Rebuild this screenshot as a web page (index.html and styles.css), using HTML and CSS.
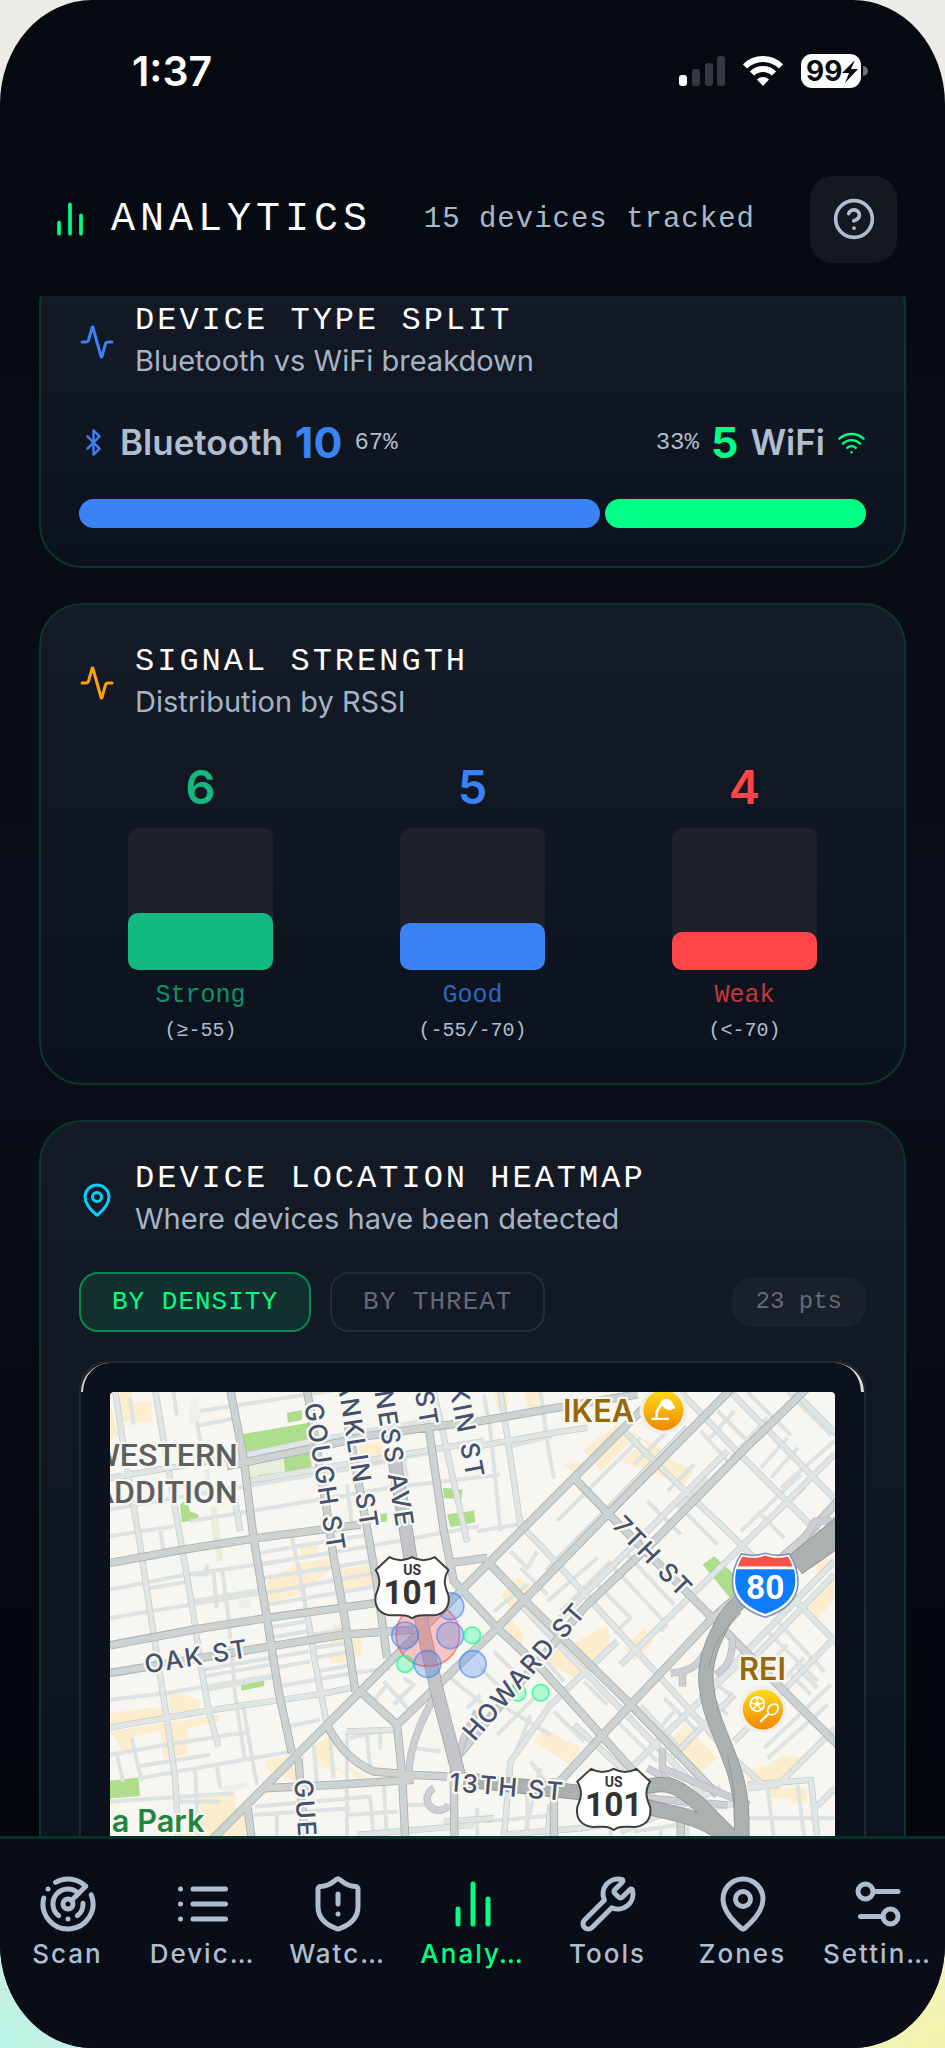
FILE: index.html
```html
<!DOCTYPE html>
<html lang="en">
<head>
    <meta charset="UTF-8">
    <meta name="viewport" content="width=device-width, initial-scale=1.0">
    <title>Analytics</title>
    <link rel="stylesheet" href="styles.css">
</head>
<body>
    <div class="phone">
        <div class="status-bar">
            <span class="clock">1:37</span>
            <div class="status-icons">
                <svg width="48" height="34" viewBox="0 0 48 34">
                    <rect x="1" y="21" width="8" height="11" rx="3" fill="#fff"/>
                    <rect x="14" y="15" width="8" height="17" rx="3" fill="#35393f"/>
                    <rect x="27" y="9" width="8" height="23" rx="3" fill="#35393f"/>
                    <rect x="39" y="2" width="8" height="30" rx="3" fill="#35393f"/>
                </svg>
                <svg width="42" height="34" viewBox="0 0 42 34">
                    <g fill="none" stroke="#fff" stroke-width="6">
                        <path d="M3 12.500a25.500 25.500 0 0 1 36 0"/>
                        <path d="M10 19.500a15.500 15.500 0 0 1 22 0"/>
                    </g>
                    <path d="M21 32l-6-6.500a8.500 8.500 0 0 1 12 0z" fill="#fff"/>
                </svg>
                <svg width="68" height="36" viewBox="0 0 68 36">
                    <rect x="1" y="1" width="60" height="34" rx="11" fill="#fff"/>
                    <path d="M63 13a5 5 0 0 1 0 10z" fill="#6b6e73"/>
                    <text x="6" y="28" class="battery-text">99</text>
                    <path d="M55 7L42 20h7l-4 10 13-14h-7z" fill="#060a12"/>
                </svg>
            </div>
        </div>

        <header class="header">
            <svg class="icon icon-green" width="44" height="44" viewBox="0 0 24 24" stroke-width="2"><path d="M6 20v-6M12 20V4M18 20V10"/></svg>
            <h1>ANALYTICS</h1>
            <span class="tracked">15 devices tracked</span>
            <button type="button" class="help" aria-label="Help">
                <svg class="icon" width="44" height="44" viewBox="0 0 24 24" stroke-width="2"><circle cx="12" cy="12" r="10"/><path d="M9.090 9a3 3 0 0 1 5.830 1c0 2-3 3-3 3M12 17h.01"/></svg>
            </button>
        </header>

        <main>
            <div class="cards">
                <section class="card">
                    <div class="card-head">
                        <svg class="icon icon-blue" width="36" height="36" viewBox="0 0 24 24" stroke-width="2"><path d="M22 12h-2.480a2 2 0 0 0-1.930 1.460l-2.350 8.360a.25.25 0 0 1-.48 0L9.240 2.180a.25.25 0 0 0-.48 0l-2.350 8.360A2 2 0 0 1 4.490 12H2"/></svg>
                        <div>
                            <h2>DEVICE TYPE SPLIT</h2>
                            <p>Bluetooth vs WiFi breakdown</p>
                        </div>
                    </div>
                    <div class="split-row">
                        <div class="split-item">
                            <svg class="icon icon-blue" width="29" height="29" viewBox="0 0 24 24" stroke-width="2"><path d="m7 7 10 10-5 5V2l5 5L7 17"/></svg>
                            <span class="split-name">Bluetooth</span>
                            <span class="split-count blue">10</span>
                            <span class="split-pct">67%</span>
                        </div>
                        <div class="split-item">
                            <span class="split-pct">33%</span>
                            <span class="split-count green">5</span>
                            <span class="split-name">WiFi</span>
                            <svg class="icon icon-green" width="29" height="29" viewBox="0 0 24 24" stroke-width="2"><path d="M12 20h.01M2 8.820a15 15 0 0 1 20 0M5 12.860a10 10 0 0 1 14 0M8.500 16.430a5 5 0 0 1 7 0"/></svg>
                        </div>
                    </div>
                    <div class="split-bar">
                        <div class="bg-blue" style="flex-grow: 10"></div>
                        <div class="bg-green" style="flex-grow: 5"></div>
                    </div>
                </section>

                <section class="card">
                    <div class="card-head">
                        <svg class="icon icon-orange" width="36" height="36" viewBox="0 0 24 24" stroke-width="2"><path d="M22 12h-2.480a2 2 0 0 0-1.930 1.460l-2.350 8.360a.25.25 0 0 1-.48 0L9.240 2.180a.25.25 0 0 0-.48 0l-2.350 8.360A2 2 0 0 1 4.490 12H2"/></svg>
                        <div>
                            <h2>SIGNAL STRENGTH</h2>
                            <p>Distribution by RSSI</p>
                        </div>
                    </div>
                    <div class="signals">
                        <div class="signal emerald">
                            <span class="signal-count">6</span>
                            <div class="signal-track"><div class="signal-fill" style="height: 40%"></div></div>
                            <span class="signal-label">Strong</span>
                            <span class="signal-range">(≥-55)</span>
                        </div>
                        <div class="signal blue">
                            <span class="signal-count">5</span>
                            <div class="signal-track"><div class="signal-fill" style="height: 33.300%"></div></div>
                            <span class="signal-label">Good</span>
                            <span class="signal-range">(-55/-70)</span>
                        </div>
                        <div class="signal red">
                            <span class="signal-count">4</span>
                            <div class="signal-track"><div class="signal-fill" style="height: 26.700%"></div></div>
                            <span class="signal-label">Weak</span>
                            <span class="signal-range">(&lt;-70)</span>
                        </div>
                    </div>
                </section>

                <section class="card">
                    <div class="card-head">
                        <svg class="icon icon-cyan" width="36" height="36" viewBox="0 0 24 24" stroke-width="2"><path d="M20 10c0 4.990-5.540 10.190-7.400 11.800a1 1 0 0 1-1.200 0C9.540 20.190 4 14.990 4 10a8 8 0 0 1 16 0"/><circle cx="12" cy="10" r="3"/></svg>
                        <div>
                            <h2>DEVICE LOCATION HEATMAP</h2>
                            <p>Where devices have been detected</p>
                        </div>
                    </div>
                    <div class="filters">
                        <button type="button" class="filter active">BY DENSITY</button>
                        <button type="button" class="filter">BY THREAT</button>
                        <span class="points">23 pts</span>
                    </div>
                    <div class="map-frame">
                        <svg class="map" viewBox="30 63 2172 1500">
                            <defs>
                                <linearGradient id="gold" x1="0" y1="0" x2="0" y2="1">
                                    <stop offset="0" stop-color="#fddc18"/>
                                    <stop offset="1" stop-color="#f08800"/>
                                </linearGradient>
                                <path id="minor" d="M30 495l190-30M270 450l600-100 330-40M30 655l230-45 210-30 220-35M30 740l240-40 220-35M150 650l120-20M275 690l210-35M30 415l200-35 210-35 300-50 250-50M30 985l170-20 330-55M310 895l200-35M310 915l200-35M320 955l210-40M30 1150l170-30 250-40M110 1185l220-35M120 1220l450-80M30 1290l370-25M240 1290h120M300 120l420-65M290 165l120-25M480 545l110-20 220-35M485 580l320-55 330-60M490 620l320-50M495 665l330-60M500 700l330-55M500 770l120-20M505 800l115-20M630 790l100-15M640 830l100-15M515 860l110-20M520 890l110-20M530 945l230-40 110-15M560 1065l100-20M640 860l110-20M650 900l110-20M465 1305l350-30M460 1330l290-20M740 1330l150-10M750 1100l80-20M800 1090l10 110M840 1085v50M690 1100l10 120M640 1120l10 110M740 1080v330M530 1330v80M810 1280l10 120M850 1240l10 160M285 1190l10 210M350 1180l10 70M50 1150l20 80M95 1100l30 130M430 1010l40 230M180 470l10 70M90 80l10 80M220 63l10 70M290 150l10 60M575 500l20 90 25 140M340 600l10 110M365 590l20 150 20 230 30 200M280 610h40v-30M740 340l15 120M920 1300h60M940 1130l80 10M1050 920l100 80M880 1000l60-60-30-20M850 930l80 90M810 1000l50-60M1100 1010l40-40M1000 240l-90 20 10 60M1150 70l20 110 30 300M1215 230l80-20 60-15M1320 63l20 150 20 110M1130 480l120-20 40-10M1370 450l150-150 100-100M1470 260l90-90M1600 280l100-100M1230 540l50 50 30-50M1260 590l80 80M1340 690l150-130M1380 720l150-150M1480 630l110 110-50 45M1530 580l160 170M1570 540l150 160M1620 530l150 150M1640 390l100 100M1750 420l100 100M1800 180l80 90M1850 120l100 100M1820 210l80-90M1890 260l110-120M1700 360l80-80M1730 410l90-90M1980 290l80-90M2010 320l80-90M2040 350l160-140M1920 480l180-170M1950 500l160-150M1970 420l80 80M2050 170l-40-30M2060 63l130 130M1940 63l130 130M2000 780l150 150M2030 750l140 150M2060 820l-100 100M2110 860l-70 70M2150 950l-60-60M2130 970l-60-60M1990 1130l200-190M2000 1160l180-160M1890 970l-70-50M1880 1030l-60-60M1690 980l100 100M1660 1090l60-70M1550 1050l120 120M1620 1000l110 120M1450 930l70 70M1360 1020l90 90M1200 1000l150 90M1190 1090l110-110M1240 1160l50-130M1290 1170l60 80M1150 1350l220-20M1130 1400v-90M1280 1270v140M1320 1190l-50 210M1200 950l-60-60M1240 900l-60-60M1600 1380l200-30M1760 1340v80M1680 1370v60M1530 1360v60M1940 1340h260M2000 1250l20 160M2090 1240l20 160M1700 760l-20 20M1180 720l100-80M1320 850l70 80"/>
                                <path id="side" d="M165 55l70 415 25 140 15 90 30 200 20 115 30 110M45 55l30 200 45 265 30 200 50 320 25 180 10 180M30 320l210-35 180-30 220-45 350-60M440 330l560-95 150-25M30 1068l290-50 340-50 100-20M620 720l20 130 40 210M400 360l20 120M740 1080l145-5M1000 63l100 450M1110 230l220-40 130-20M1200 63l60 400 60 60 300 330 190 210 80 90 100 90M1560 170l110 110 220 210 80 80 280 290M1740 63l170 180 290 290M1890 63l310 320M2080 63l130 130M1260 700l220 230 330 340M1340 600l420-430M1380 740l500-500M1560 880l480-470 160-160M1800 980l400-410M1920 900l280-290M1900 1110l300-310M1200 1390l240-20 500-80M1210 1400l20-230 120-170 200-190M1420 1060l340 310M1600 1180l330-320M1700 1170l200-200 M1350 1300l-10 110M1940 1240l190-15 20 180M1030 1350l150-10M770 1390l350-30M1560 1380l300-130M2202 1070l-170 170-90 10M2202 1250l-60 60"/>
                                <path id="main" d="M390 55l40 205 30 240 40 240 35 220 40 185M620 55l60 365 20 140 30 160 35 240M740 150l60 320 30 170 30 220M985 170l45 310 30 150 130 140 140 130 260 290 50 60M30 575l220-40 225-35 305-40M30 822l250-47 220-35 330-45M30 905l270-45 210-35 220-35 210-15M380 285l240-50 180-40 210-30 130-15 200-35 270-45M330 1410l260-260 180-180 170-170 220-220 260-260 190-190 90-85M890 1060l300-290 330-340 370-375M1050 1180l100-120 300-350 220-210 265-270 180-175M1340 1270l250-270 240-255 280-245 100-110M1420 320l105 110 315 315 230 235 150 150M1160 570l110 115 320 315 260 270M780 960l110 100 15 150 10 200M680 1060c30 60 70 110 140 140l120 10 100 5M490 1250l210-10 240-15M595 1160l5 80 15 170M440 1290l15 120M1060 1230l2 180M1360 1220v190M1740 1340v80M1050 575l110-15"/>
                                <path id="ramp" d="M1000 980c-40 70-70 140-75 220M1055 1210l35-110 40-80M1000 1250a35 35 0 1 0 45 50M1840 790c-40 90-60 110-130 115M1745 905v40M1895 800c0 70-20 90-50 110M2202 450h-60l-30 50M1685 1130v60l140 60 120 50M1640 1190l90 50M1640 1280l240 20"/>
                                <path id="van" d="M880 250l50 310 35 200 45 200 65 250"/>
                                <path id="freeway" d="M2220 455l-160 130c-100 70-170 110-205 190-30 60-50 120-35 190 10 80 60 160 85 250 20 80 18 110 18 200M2220 500l-130 90M1090 1225l350 38 210-20c60-15 90 10 140 50l120 120M1620 1300c90 30 160 20 280 110"/>
                            </defs>

                            <rect x="30" y="63" width="2172" height="1500" fill="#f7f6f1"/>

                            <!-- blocks -->
                            <path fill="#fbedcd" d="M60 63h35v30h60v60H60zM30 90l25 100-25 20zM600 530l50-8 5 30-50 8zM500 630l80-50 110-20 5 30-100 80-90 25zM720 595l90-15 10 60-95 15zM700 760h20l8 60-40 10zM750 800l30-5 3 60-30 5zM685 850l50-8 3 30-50 5zM205 960l30 5 60 20 5 30-90 10zM30 1025l160-20v40l-160 20zM30 1080l330-50-5 20-90 20-5 80-70 10-10-80-80 15v40l-30 5zM300 1265h105v40l30 20v80H230l70-60zM495 1165l95-15-5 80-90-40zM640 1120l45-25 10 80 40 30-80-20zM740 1180l60 40h-35zM775 225l70-15v50l-60 10zM1180 63h40v50h-30zM1275 63h40v50h-35zM1390 280l70-10-30 40zM1450 240l30-30 30-20 40-30 60 30-110 110zM1560 270l60-50 160 80-30 40zM1620 200l50 20 100 100-30 20zM1200 675l50-55 50 20-60 80zM1230 740l40 50-10 40-50-60zM1340 870l50-60 80 60-35 60zM1410 820l110-60 10 60-40 60zM1570 830l60-60 30 40-60 60zM1300 1110l30-40 110 60-30 50zM1700 1110l55-50 95 100-50 40zM2120 710l80-100v70l-60 80zM2140 570l60-10v30l-50 20zM1940 1200l60-20 50-30 60 10-80 80h-80zM2000 1250h115l5 45h-45l-5-15h-70z"/>
                            <path fill="#aedd8c" d="M422 190l205-35-3 65-190 30zM560 125l45-8v30l-42 8zM550 258l80-13 5 50-80 20zM470 305l45-5v15l-40 12zM240 400l20-15 10 35 25 10v15l-50 8zM420 930l72-14v28l-68 14zM30 1228l85-10 5 55-90 8zM1028 350l58 5-3 28-53-2zM1040 430l80-12 5 35-75 15zM605 650h8l10 70h-12zM840 428l20-2v25l-18 2zM1805 580l35-25 60 55v65l-15 2z"/>
                            <path fill="#e7efdc" d="M440 275l110-18v45l-105 15zM330 405h20l20 165h-20l-15-90zM315 295l12-2 8 80-15 3z"/>
                            <path fill="#eeeeea" d="M270 90l25-10 5 60-30 20zM415 690l30-10 10 30h-35zM350 1250l90-20v20l-70 10z"/>

                            <!-- streets -->
                            <use href="#minor" class="road minor"/>
                            <use href="#side" class="road side-case"/>
                            <use href="#side" class="road side"/>
                            <use href="#main" class="road main-case"/>
                            <use href="#main" class="road main"/>
                            <use href="#ramp" class="road ramp-case"/>
                            <use href="#ramp" class="road ramp"/>
                            <use href="#van" class="road van-case"/>
                            <use href="#van" class="road van"/>
                            <use href="#freeway" class="road freeway-case"/>
                            <use href="#freeway" class="road freeway"/>
                            <path d="M1920 725c-60 60-85 100-95 160M1880 1150l20 110v90" fill="none" stroke="#949a99" stroke-width="3"/>

                            <!-- detections -->
                            <circle cx="982" cy="790" r="95" class="hit-red"/>
                            <g class="hit-blue">
                                <circle cx="1050" cy="705" r="40"/>
                                <circle cx="914" cy="792" r="40"/>
                                <circle cx="1049" cy="792" r="40"/>
                                <circle cx="981" cy="878" r="40"/>
                                <circle cx="1117" cy="878" r="40"/>
                            </g>
                            <g class="hit-green">
                                <circle cx="1115" cy="792" r="25"/>
                                <circle cx="914" cy="878" r="25"/>
                                <circle cx="1251" cy="964" r="25"/>
                                <circle cx="1320" cy="964" r="25"/>
                            </g>

                            <!-- street names -->
                            <g class="street">
                                <text transform="translate(612 100) rotate(81)">GOUGH ST</text>
                                <text transform="translate(782 478) rotate(81)" text-anchor="end">ANKLIN ST</text>
                                <text transform="translate(888 474) rotate(81)" text-anchor="end">NESS AVE</text>
                                <text transform="translate(962 172) rotate(80)" text-anchor="end">ST</text>
                                <text transform="translate(1100 328) rotate(79)" text-anchor="end">KIN ST</text>
                                <text transform="translate(138 906) rotate(-9)">OAK ST</text>
                                <text transform="translate(582 1225) rotate(86)">GUE</text>
                                <text transform="translate(1122 1112) rotate(-49)">HOWARD ST</text>
                                <text transform="translate(1532 466) rotate(46)">7TH ST</text>
                                <text transform="translate(1045 1258) rotate(5)">13TH ST</text>
                            </g>
                            <g class="area" text-anchor="end">
                                <text x="413" y="285">WESTERN</text>
                                <text x="413" y="395">ADDITION</text>
                            </g>
                            <text class="park" x="313" y="1380" text-anchor="end">a Park</text>
                            <text class="shop" x="1600" y="153" text-anchor="end">IKEA</text>
                            <text class="shop" x="1985" y="927" text-anchor="middle">REI</text>

                            <!-- shop pins -->
                            <g transform="translate(1688 118)">
                                <circle r="71" fill="#f1efea"/>
                                <circle r="60" fill="url(#gold)"/>
                                <path d="M-36 22h52v7h-52zM-8-24c4-14 22-14 32-4l12 22c-6 2-10 2-14 6-14 0-26-10-30-24z" fill="#fff"/>
                                <path d="M-20 22v-18l16-26" fill="none" stroke="#fff" stroke-width="8"/>
                            </g>
                            <g transform="translate(1986 1014)">
                                <circle r="71" fill="#f1efea"/>
                                <circle r="60" fill="url(#gold)"/>
                                <g fill="none" stroke="#fff" stroke-width="5">
                                    <circle cx="-17" cy="-16" r="21"/>
                                    <path d="M-17-36v10M-36-20l10 4M2-20l-10 4M-29 0l6-8M-5 0l-6-8"/>
                                    <ellipse cx="30" cy="0" rx="18" ry="14" transform="rotate(-45 30 0)"/>
                                    <path d="M18 12L-8 37" stroke-width="7"/>
                                </g>
                                <path d="M-17-25l9 7-4 10h-10l-4-10z" fill="#fff"/>
                            </g>

                            <!-- route shields -->
                            <g transform="translate(935 650)">
                                <path class="shield" d="M-68-92c22 12 46 12 68 0 22 12 46 12 68 0l41 38c-20 34-8 54 0 76 6 38-16 58-46 60-30 0-46-4-63 9-17-13-33-9-63-9-30-2-52-22-46-60 8-22 20-42 0-76z"/>
                                <text class="shield-us" y="-39">US</text>
                                <text class="shield-num" y="49">101</text>
                            </g>
                            <g transform="translate(1539 1284)">
                                <path class="shield" d="M-68-92c22 12 46 12 68 0 22 12 46 12 68 0l41 38c-20 34-8 54 0 76 6 38-16 58-46 60-30 0-46-4-63 9-17-13-33-9-63-9-30-2-52-22-46-60 8-22 20-42 0-76z"/>
                                <text class="shield-us" y="-39">US</text>
                                <text class="shield-num" y="49">101</text>
                            </g>
                            <g transform="translate(1993 642)">
                                <path d="M-72-94c24 6 48 6 72-2 24 8 48 8 72 2 18 28 28 58 26 92-4 50-42 80-98 98-56-18-94-48-98-98-2-34 8-64 26-92z" fill="#fff" stroke="#7f96ba" stroke-width="5"/>
                                <path d="M-86-48H86c4 16 5 30 3 48-6 42-38 68-89 86C-51 68-83 42-89 0c-2-18-1-32 3-48z" fill="#0d7dff"/>
                                <path d="M-82-56c4-12 8-22 14-30 24 6 46 5 68-3 22 8 44 9 68 3 6 8 10 18 14 30z" fill="#f6544b"/>
                                <text class="shield-80" y="41">80</text>
                            </g>
                        </svg>
                    </div>
                </section>
            </div>
        </main>

        <nav class="tabs">
            <a href="#scan"><svg class="icon" width="60" height="60" viewBox="0 0 24 24" stroke-width="2"><path d="M19.070 4.930A10 10 0 0 0 6.990 3.340M4 6h.01M2.290 9.620A10 10 0 1 0 21.310 8.350M16.240 7.760A6 6 0 1 0 8.230 16.670M12 18h.01M17.990 11.660A6 6 0 0 1 15.770 16.670"/><circle cx="12" cy="12" r="2"/><path d="m13.410 10.590 5.660-5.660"/></svg>Scan</a>
            <a href="#devices"><svg class="icon" width="60" height="60" viewBox="0 0 24 24" stroke-width="2"><path d="M8 6h13M8 12h13M8 18h13M3 6h.01M3 12h.01M3 18h.01"/></svg>Devic…</a>
            <a href="#watch"><svg class="icon" width="60" height="60" viewBox="0 0 24 24" stroke-width="2"><path d="M20 13c0 5-3.500 7.500-7.660 8.950a1 1 0 0 1-.67-.01C7.500 20.500 4 18 4 13V6a1 1 0 0 1 1-1c2 0 4.500-1.200 6.240-2.720a1.170 1.170 0 0 1 1.520 0C14.510 3.810 17 5 19 5a1 1 0 0 1 1 1zM12 8v4M12 16h.01"/></svg>Watc…</a>
            <a href="#analytics" class="active"><svg class="icon" width="60" height="60" viewBox="0 0 24 24" stroke-width="2"><path d="M6 20v-6M12 20V4M18 20V10"/></svg>Analy…</a>
            <a href="#tools"><svg class="icon" width="60" height="60" viewBox="0 0 24 24" stroke-width="2"><path d="M14.700 6.300a1 1 0 0 0 0 1.400l1.600 1.600a1 1 0 0 0 1.400 0l3.106-3.105c.32-.322.863-.22.983.218a6 6 0 0 1-8.259 7.057l-7.910 7.910a1 1 0 0 1-2.999-3l7.910-7.910a6 6 0 0 1 7.057-8.259c.438.12.54.662.219.984z"/></svg>Tools</a>
            <a href="#zones"><svg class="icon" width="60" height="60" viewBox="0 0 24 24" stroke-width="2"><path d="M20 10c0 4.990-5.540 10.190-7.400 11.800a1 1 0 0 1-1.200 0C9.540 20.190 4 14.990 4 10a8 8 0 0 1 16 0"/><circle cx="12" cy="10" r="3"/></svg>Zones</a>
            <a href="#settings"><svg class="icon" width="60" height="60" viewBox="0 0 24 24" stroke-width="2"><path d="M20 7h-9M14 17H5"/><circle cx="17" cy="17" r="3"/><circle cx="7" cy="7" r="3"/></svg>Settin…</a>
        </nav>
    </div>
</body>
</html>
```
FILE: styles.css
```css
* {
    box-sizing: border-box;
}

body {
    margin: 0;
    font-family: Inter, sans-serif;
    color: #fff;
    background:
        radial-gradient(circle at 0 100%, #b9f3e3, transparent 300px),
        radial-gradient(circle at 100% 100%, #f3f5ab, transparent 300px),
        #edebe6;
}

h1, h2, p {
    margin: 0;
    font-weight: 400;
}

button {
    font-family: inherit;
    cursor: pointer;
}

.phone {
    display: flex;
    flex-direction: column;
    height: 100vh;
    border-radius: 92px / 104px;
    overflow: hidden;
    background: linear-gradient(#050910, #090e1a 50%, #04060c 90%);
}

.icon {
    flex: none;
    fill: none;
    stroke: #afbdce;
    stroke-linecap: round;
    stroke-linejoin: round;
}

.icon-green { stroke: #00ff84; }
.icon-blue { stroke: #3b82f6; }
.icon-orange { stroke: #ffa305; }
.icon-cyan { stroke: #00d2ff; }

.blue { color: #3b82f6; }
.green { color: #00ff84; }
.emerald { color: #12b981; }
.red { color: #ff4545; }
.bg-blue { background: #3b82f6; }
.bg-green { background: #00ff84; }

/* status bar */
.status-bar {
    flex: none;
    display: flex;
    align-items: center;
    justify-content: space-between;
    height: 142px;
    padding: 0 77px 0 132px;
}

.clock {
    font-size: 41px;
    font-weight: 600;
}

.status-icons {
    display: flex;
    align-items: center;
    gap: 16px;
}

.battery-text {
    font-size: 28px;
    font-weight: 700;
    fill: #060a12;
}

/* header */
.header {
    flex: none;
    display: flex;
    align-items: center;
    height: 154px;
    padding: 0 48px;
    font-family: "Liberation Mono", monospace;
}

.header h1 {
    margin-left: 19px;
    font-size: 40px;
    letter-spacing: 5px;
}

.tracked {
    margin-left: auto;
    margin-right: 55px;
    font-size: 29px;
    letter-spacing: 1px;
    color: #a9b7c8;
}

.help {
    display: flex;
    align-items: center;
    justify-content: center;
    width: 87px;
    height: 87px;
    padding: 0;
    border: none;
    border-radius: 23px;
    background: #141921;
}

/* cards */
main {
    flex: 1;
    min-height: 0;
    overflow: hidden;
}

.cards {
    display: flex;
    flex-direction: column;
    gap: 35px;
    margin-top: -34px;
    padding: 0 39px;
}

.card {
    padding: 38px;
    border: 2px solid #0c352f;
    border-radius: 43px;
    background: linear-gradient(#151b26, #101622 50%, #0c121d);
}

.card-head {
    display: flex;
    align-items: center;
    gap: 20px;
    margin-bottom: 32px;
}

.card-head h2 {
    font-family: "Liberation Mono", monospace;
    font-size: 32px;
    line-height: 38px;
    letter-spacing: 3px;
}

.card-head p {
    font-size: 29px;
    line-height: 42px;
    color: #a5b4c5;
}

.split-row {
    display: flex;
    justify-content: space-between;
    height: 56px;
    margin-bottom: 29px;
}

.split-item {
    display: flex;
    align-items: center;
    gap: 12px;
}

.split-name {
    font-size: 35px;
    font-weight: 600;
    color: #afbdce;
}

.split-count {
    font-size: 43px;
    font-weight: 700;
}

.split-pct {
    font-family: "Liberation Mono", monospace;
    font-size: 24px;
    color: #afbdce;
}

.split-bar {
    display: flex;
    gap: 5px;
    height: 29px;
}

.split-bar div {
    border-radius: 15px;
}

.signals {
    display: grid;
    grid-template-columns: repeat(3, 1fr);
    gap: 29px;
}

.signal {
    display: flex;
    flex-direction: column;
    align-items: center;
    font-family: "Liberation Mono", monospace;
}

.signal-count {
    font-family: Inter, sans-serif;
    font-size: 47px;
    font-weight: 600;
    line-height: 64px;
}

.signal-track {
    display: flex;
    align-items: flex-end;
    width: 60%;
    height: 142px;
    margin: 9px 0 11px;
    border-radius: 10px;
    background: #1c212b;
}

.signal-fill {
    width: 100%;
    border-radius: 10px;
    background: currentColor;
}

.signal-label {
    margin-bottom: 5px;
    font-size: 25px;
    line-height: 30px;
    opacity: 0.75;
}

.signal-range {
    font-size: 20px;
    line-height: 29px;
    color: #afbdce;
}

/* heatmap */
.filters {
    display: flex;
    align-items: center;
    gap: 19px;
    margin-bottom: 29px;
    font-family: "Liberation Mono", monospace;
}

.filter {
    height: 60px;
    padding: 0 31px;
    border: 2px solid #262b35;
    border-radius: 19px;
    background: transparent;
    color: #636975;
    font-size: 26px;
    letter-spacing: 1px;
}

.filter.active {
    border-color: #0b8751;
    background: #11302f;
    color: #00ff84;
}

.points {
    margin-left: auto;
    padding: 0 24px;
    border-radius: 21px;
    background: #1a202b;
    color: #636975;
    font-size: 24px;
    line-height: 50px;
}

.map-frame {
    position: relative;
    padding: 29px;
    border: 2px solid #23272f;
    border-radius: 29px;
    background: #0c121d;
}

/* light map edge showing through at the rounded corners */
.map-frame::before,
.map-frame::after {
    content: "";
    position: absolute;
    top: 0;
    width: 29px;
    height: 29px;
}

.map-frame::before {
    left: 0;
    border-left: 2px solid #d8d5cf;
    border-top-left-radius: 29px;
}

.map-frame::after {
    right: 0;
    border-right: 3px solid #e2e0da;
    border-top-right-radius: 29px;
}

.map {
    display: block;
    width: 100%;
    border-radius: 4px;
}

.road {
    fill: none;
    stroke-linejoin: round;
}

.minor { stroke: #dde2e3; stroke-width: 12px; }
.side-case { stroke: #c3cac9; stroke-width: 19px; }
.side { stroke: #e0e6e6; stroke-width: 15px; }
.main-case { stroke: #a9afad; stroke-width: 25px; }
.main { stroke: #cdd3d3; stroke-width: 20px; }
.ramp-case { stroke: #b4b6ba; stroke-width: 22px; }
.ramp { stroke: #cecfd4; stroke-width: 18px; }
.van-case { stroke: #a4a6aa; stroke-width: 42px; }
.van { stroke: #c3c5c9; stroke-width: 37px; }
.freeway-case { stroke: #8f9594; stroke-width: 46px; }
.freeway { stroke: #abb1b0; stroke-width: 41px; }

.hit-red { fill: rgba(255, 69, 69, 0.28); stroke: rgba(255, 69, 69, 0.6); stroke-width: 5px; }
.hit-blue { fill: rgba(59, 130, 246, 0.28); stroke: rgba(59, 130, 246, 0.6); stroke-width: 5px; }
.hit-green { fill: rgba(0, 255, 132, 0.28); stroke: rgba(0, 255, 132, 0.65); stroke-width: 5px; }

.street text, .area text, .park, .shop {
    stroke: #f7f6f1;
    stroke-width: 14px;
    stroke-linejoin: round;
    paint-order: stroke;
}

.street {
    font-size: 76px;
    font-weight: 500;
    letter-spacing: 6px;
    fill: #44506c;
}

.area {
    font-family: Roboto, sans-serif;
    font-size: 96px;
    font-weight: 500;
    fill: #5d6061;
}

.park {
    font-size: 92px;
    font-weight: 600;
    fill: #20863d;
}

.shop {
    font-size: 92px;
    font-weight: 600;
    fill: #96690b;
}

.shield {
    fill: #fff;
    stroke: #3f3f3f;
    stroke-width: 6px;
}

.shield-us, .shield-num, .shield-80 {
    font-family: Roboto, sans-serif;
    font-weight: 700;
    text-anchor: middle;
    fill: #333;
}

.shield-us { font-size: 42px; }
.shield-num { font-size: 100px; }
.shield-80 { font-size: 100px; fill: #fff; }

/* bottom tabs */
.tabs {
    flex: none;
    display: grid;
    grid-template-columns: repeat(7, 1fr);
    height: 212px;
    padding-top: 35px;
    border-top: 3px solid #0b2e2a;
    background: #080d18;
}

.tabs a {
    display: flex;
    flex-direction: column;
    align-items: center;
    gap: 2px;
    color: #afbdce;
    font-size: 26px;
    font-weight: 500;
    line-height: 36px;
    letter-spacing: 2px;
    text-decoration: none;
}

.tabs a.active {
    color: #00ff84;
}

.tabs a.active .icon {
    stroke: #00ff84;
}
```
